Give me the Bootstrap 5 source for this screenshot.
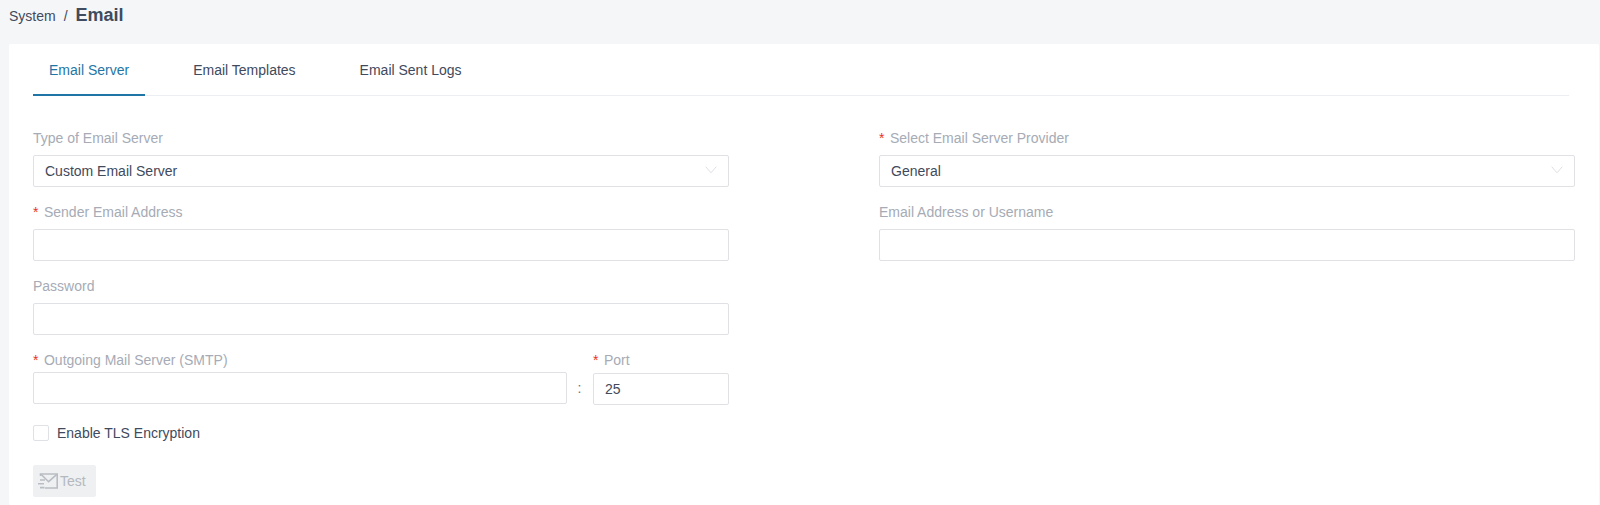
<!DOCTYPE html>
<html lang="en">
<head>
<meta charset="utf-8">
<title>Email</title>
<link href="https://cdn.jsdelivr.net/npm/bootstrap@5.3.0/dist/css/bootstrap.min.css" rel="stylesheet">
<style>
html,body{height:505px;overflow:hidden}
body{background:#f5f6f8;font-family:"Liberation Sans",Arial,sans-serif;font-size:14px;color:#3f4a5c}
.crumbs{height:44px;padding:4px 0 0 9px;align-items:flex-start}
.crumbs .sys{line-height:22px;margin-top:1px}
.crumbs .sep{margin:1px 8px 0 8px;line-height:22px}
.crumbs .cur{font-size:18px;font-weight:700;line-height:20px;color:#3f4b5e;margin-top:1px}
.panel{margin:0 1px 0 9px;height:461px;padding:0 24px;background:#fff;border-radius:2px}
.tabs{margin-right:6px;border-bottom:1px solid #eceef1;height:52px;flex-wrap:nowrap}
.tabs .nav-link{color:#3f4a5c;font-size:14px;line-height:20px;padding:16px 16px 14px;margin-right:32px;border-bottom:2px solid transparent;height:52px;border-radius:0}
.tabs .nav-link.active{color:#1f76a6;border-bottom-color:#1f76a6}
.form-row{--bs-gutter-x:150px;margin-top:32px}
.field{margin-bottom:15px}
form label.lbl{display:block;color:#a6abb5;line-height:20px;margin-bottom:7px;font-size:14px}
.req::before{content:"*";color:#e8341c;margin-right:5.5px}
.form-control,.form-select{height:32px;border:1px solid #dfe1e4;border-radius:2px;font-size:14px;color:#3f4a5c;padding:0 11px;line-height:30px;box-shadow:none}
.form-select{background-image:none}
.sel{position:relative}
.sel svg{position:absolute;right:12px;top:11px;pointer-events:none}
.smtp{align-items:flex-start}
.smtp .host{width:534px}
.smtp .colon{width:25px;text-align:center;padding-top:28px;line-height:20px;color:#6b7380;margin-right:1px}
.smtp .port{width:136px}
.smtp .host label.lbl{margin-bottom:2px}
.smtp .port label.lbl{margin-bottom:3px}
.check{gap:8px;margin-top:20px;height:16px}
.check .form-check-input{width:16px;height:16px;margin:0;border:1px solid #dfe1e4;border-radius:2px;float:none}
.check label{line-height:16px;color:#3f4a5c}
.btn-test{--bs-btn-disabled-bg:#eef0f2;--bs-btn-disabled-color:#b4b8bf;--bs-btn-disabled-border-color:#eef0f2;--bs-btn-disabled-opacity:1;width:63px;height:32px;margin-top:24px;padding:0 0 0 4px;border-radius:2px;font-size:14px;gap:2px}
</style>
</head>
<body>
<div class="crumbs d-flex">
  <span class="sys">System</span><span class="sep">/</span><span class="cur">Email</span>
</div>
<div class="panel">
  <ul class="nav tabs">
    <li class="nav-item"><a class="nav-link active" href="#">Email Server</a></li>
    <li class="nav-item"><a class="nav-link" href="#">Email Templates</a></li>
    <li class="nav-item"><a class="nav-link" href="#">Email Sent Logs</a></li>
  </ul>
  <form>
    <div class="row form-row">
      <div class="col-6">
        <div class="field">
          <label class="lbl">Type of Email Server</label>
          <div class="sel">
            <select class="form-select"><option>Custom Email Server</option></select>
            <svg width="12" height="8" viewBox="0 0 12 8" fill="none" stroke="#dcdfe3" stroke-width="1"><path d="M.7.7 6 6.8 11.3.7"/></svg>
          </div>
        </div>
        <div class="field">
          <label class="lbl req">Sender Email Address</label>
          <input class="form-control" type="text">
        </div>
        <div class="field">
          <label class="lbl">Password</label>
          <input class="form-control" type="password">
        </div>
        <div class="d-flex smtp">
          <div class="host"><label class="lbl req">Outgoing Mail Server (SMTP)</label><input class="form-control" type="text"></div>
          <div class="colon">:</div>
          <div class="port"><label class="lbl req">Port</label><input class="form-control" type="text" value="25"></div>
        </div>
        <div class="d-flex align-items-center check">
          <input class="form-check-input" type="checkbox" id="tls">
          <label for="tls">Enable TLS Encryption</label>
        </div>
        <button type="button" class="btn d-flex align-items-center btn-test" disabled>
          <svg width="20" height="16" viewBox="0 0 20 16" fill="none" stroke="#b9bdc3" stroke-width="1.6"><path d="M2.5 3V1h16.7v14H7"/><path d="M3 1.3l7.6 7.4 8.2-7.4"/><path d="M2 7h5M0 10.7h6M2 14.6h4.5"/></svg>
          <span>Test</span>
        </button>
      </div>
      <div class="col-6">
        <div class="field">
          <label class="lbl req">Select Email Server Provider</label>
          <div class="sel">
            <select class="form-select"><option>General</option></select>
            <svg width="12" height="8" viewBox="0 0 12 8" fill="none" stroke="#dcdfe3" stroke-width="1"><path d="M.7.7 6 6.8 11.3.7"/></svg>
          </div>
        </div>
        <div class="field">
          <label class="lbl">Email Address or Username</label>
          <input class="form-control" type="text">
        </div>
      </div>
    </div>
  </form>
</div>
<script src="https://cdn.jsdelivr.net/npm/bootstrap@5.3.0/dist/js/bootstrap.bundle.min.js"></script>
</body>
</html>
